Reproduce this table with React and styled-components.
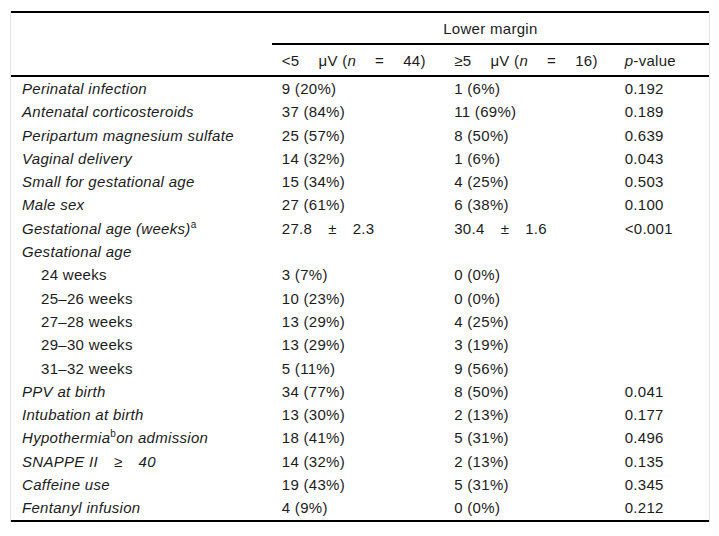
import styled, { createGlobalStyle } from "styled-components";

const GlobalStyle = createGlobalStyle`
  body {
    margin: 0;
    background: #fff;
    font-family: "Liberation Sans", Arial, sans-serif;
    color: #1c1c1c;
  }
`;

const Page = styled.div`
  padding: 11px 11px 13px 10px;
`;

const Frame = styled.div`
  width: 698px;
  border-left: 1px solid #e6e6e6;
  border-right: 1px solid #e6e6e6;
`;

const Table = styled.table`
  width: 100%;
  border-collapse: collapse;
  table-layout: fixed;
  border-top: 2px solid #000;
  border-bottom: 2px solid #000;
  font-size: 15px;
  letter-spacing: 0.3px;
`;

const HeadCell = styled.th`
  height: 30px;
  padding: ${(p) => (p.$center ? "0 10px" : "0 0 0 10px")};
  font-weight: normal;
  text-align: ${(p) => (p.$center ? "center" : "left")};
  border-bottom: ${(p) => (p.$rule || p.$bottom ? "2px solid #000" : "none")};
  white-space: nowrap;
  vertical-align: middle;
`;

const Cell = styled.td`
  padding: 1px 0 1px 10px;
  line-height: 21.3px;
  white-space: nowrap;
  vertical-align: middle;
`;

const LabelCell = styled(Cell)`
  font-style: ${(p) => (p.$sub ? "normal" : "italic")};
  padding-left: ${(p) => (p.$sub ? "30px" : "11px")};
`;

const Sup = styled.sup`
  font-size: 10px;
  font-style: normal;
  line-height: 0;
`;

const Gap = styled.span`
  display: inline-block;
  width: ${(p) => p.$w || 19}px;
`;

function Spaced({ parts }) {
  return parts.map((part, i) => (
    <span key={i}>
      {i > 0 && <Gap $w={16} />}
      {part}
    </span>
  ));
}

const rows = [
  { label: "Perinatal infection", a: "9 (20%)", b: "1 (6%)", p: "0.192" },
  { label: "Antenatal corticosteroids", a: "37 (84%)", b: "11 (69%)", p: "0.189" },
  { label: "Peripartum magnesium sulfate", a: "25 (57%)", b: "8 (50%)", p: "0.639" },
  { label: "Vaginal delivery", a: "14 (32%)", b: "1 (6%)", p: "0.043" },
  { label: "Small for gestational age", a: "15 (34%)", b: "4 (25%)", p: "0.503" },
  { label: "Male sex", a: "27 (61%)", b: "6 (38%)", p: "0.100" },
  {
    label: (
      <>
        Gestational age (weeks)<Sup>a</Sup>
      </>
    ),
    a: <Spaced parts={["27.8", "±", "2.3"]} />,
    b: <Spaced parts={["30.4", "±", "1.6"]} />,
    p: "<0.001",
  },
  { label: "Gestational age", a: "", b: "", p: "" },
  { label: "24 weeks", sub: true, a: "3 (7%)", b: "0 (0%)", p: "" },
  { label: "25–26 weeks", sub: true, a: "10 (23%)", b: "0 (0%)", p: "" },
  { label: "27–28 weeks", sub: true, a: "13 (29%)", b: "4 (25%)", p: "" },
  { label: "29–30 weeks", sub: true, a: "13 (29%)", b: "3 (19%)", p: "" },
  { label: "31–32 weeks", sub: true, a: "5 (11%)", b: "9 (56%)", p: "" },
  { label: "PPV at birth", a: "34 (77%)", b: "8 (50%)", p: "0.041" },
  { label: "Intubation at birth", a: "13 (30%)", b: "2 (13%)", p: "0.177" },
  {
    label: (
      <>
        Hypothermia<Sup>b</Sup>on admission
      </>
    ),
    a: "18 (41%)",
    b: "5 (31%)",
    p: "0.496",
  },
  {
    label: <Spaced parts={["SNAPPE II", "≥", "40"]} />,
    a: "14 (32%)",
    b: "2 (13%)",
    p: "0.135",
  },
  { label: "Caffeine use", a: "19 (43%)", b: "5 (31%)", p: "0.345" },
  { label: "Fentanyl infusion", a: "4 (9%)", b: "0 (0%)", p: "0.212" },
];

const App = () => {
  return (
    <>
      <GlobalStyle />
      <Page>
        <Frame>
          <Table>
            <colgroup>
              <col style={{ width: 260 }} />
              <col style={{ width: 172 }} />
              <col style={{ width: 170 }} />
              <col style={{ width: 94 }} />
            </colgroup>
            <thead>
              <tr>
                <HeadCell />
                <HeadCell colSpan={3} $center $rule>
                  Lower margin
                </HeadCell>
              </tr>
              <tr>
                <HeadCell $bottom />
                <HeadCell $bottom>
                  &lt;5<Gap />μV (<i>n</i>
                  <Gap />=<Gap />44)
                </HeadCell>
                <HeadCell $bottom>
                  ≥5<Gap />μV (<i>n</i>
                  <Gap />=<Gap />16)
                </HeadCell>
                <HeadCell $bottom>
                  <i>p</i>-value
                </HeadCell>
              </tr>
            </thead>
            <tbody>
              {rows.map((r, i) => (
                <tr key={i}>
                  <LabelCell $sub={r.sub}>{r.label}</LabelCell>
                  <Cell>{r.a}</Cell>
                  <Cell>{r.b}</Cell>
                  <Cell>{r.p}</Cell>
                </tr>
              ))}
            </tbody>
          </Table>
        </Frame>
      </Page>
    </>
  );
};

export default App;
